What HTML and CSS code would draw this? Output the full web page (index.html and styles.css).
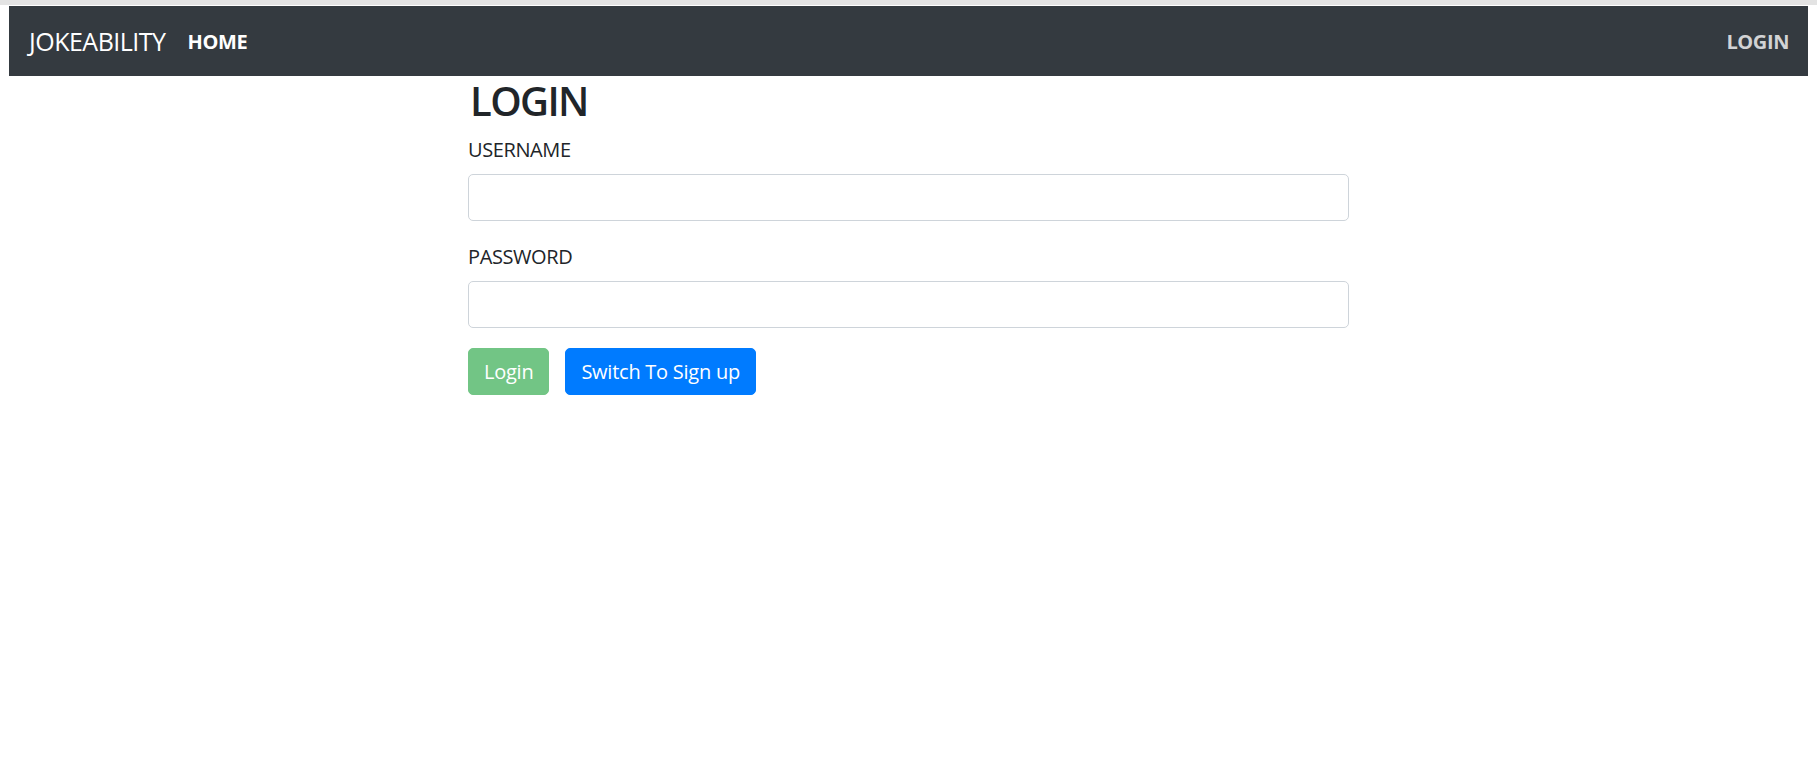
FILE: index.html
```html
<!DOCTYPE html>
<html lang="en">
<head>
<meta charset="utf-8">
<title>Jokeability - Login</title>
<link rel="stylesheet" href="styles.css">
</head>
<body>
<div class="chrome-strip"></div>
<div class="page">
  <nav class="navbar">
    <div class="nav-left">
      <a class="brand" href="#">JOKEABILITY</a>
      <a class="nav-link active" href="#">HOME</a>
    </div>
    <a class="nav-link muted" href="#">LOGIN</a>
  </nav>
  <main class="content">
    <h2 class="title">LOGIN</h2>
    <form class="form">
      <div class="form-group">
        <label class="label" for="username">USERNAME</label>
        <input class="input" id="username" type="text">
      </div>
      <div class="form-group">
        <label class="label" for="password">PASSWORD</label>
        <input class="input" id="password" type="password">
      </div>
      <div class="actions">
        <button class="btn btn-success" type="button" disabled>Login</button>
        <button class="btn btn-primary" type="button">Switch To Sign up</button>
      </div>
    </form>
  </main>
</div>
</body>
</html>
```

FILE: styles.css
```css
html, body {
  margin: 0;
  padding: 0;
  background: #fff;
}

body {
  font-family: "Open Sans", "Noto Sans", "Liberation Sans", sans-serif;
  font-size: 20px;
  line-height: 1.5;
  color: #212529;
}

.chrome-strip {
  height: 5px;
  background: #e3e3e3;
}

.page {
  padding: 1px 9px 0 9px;
}

.navbar {
  height: 70px;
  box-sizing: border-box;
  background: #343a40;
  padding: 10px 19px 10px 20px;
  display: flex;
  align-items: center;
  justify-content: space-between;
}

.nav-left {
  display: flex;
  align-items: center;
}

.brand {
  font-size: 25px;
  line-height: 37.5px;
  padding: 7px 0 5.5px;
  margin-right: 22px;
  color: #fff;
  text-decoration: none;
  letter-spacing: -0.5px;
}

.nav-link {
  font-size: 20px;
  line-height: 30px;
  padding: 11px 0 9px;
  font-weight: 700;
  text-decoration: none;
  letter-spacing: -0.4px;
}

.nav-link.active {
  color: #fff;
}

.nav-link.muted {
  color: rgba(255, 255, 255, 0.78);
}

.content {
  width: 881px;
  margin: 0 auto;
}

.title {
  margin: 1px 0 9px 2px;
  font-size: 40px;
  line-height: 48px;
  font-weight: 600;
  letter-spacing: -1.6px;
}

.form {
  margin: 0;
}

.form-group {
  margin-bottom: 20px;
}

.label {
  display: block;
  padding-top: 1px;
  margin-bottom: 9px;
  line-height: 30px;
  letter-spacing: -0.4px;
}

.input {
  display: block;
  width: 100%;
  height: 47px;
  box-sizing: border-box;
  border: 1px solid #ced4da;
  border-radius: 5px;
  padding: 7.5px 15px;
  font: inherit;
  background: #fff;
}

.actions {
  display: flex;
  gap: 16px;
}

.btn {
  font: inherit;
  font-size: 20px;
  line-height: 30px;
  height: 47px;
  padding: 8px 15px 7px;
  border: 1px solid transparent;
  border-radius: 5px;
  color: #fff;
  letter-spacing: -0.25px;
}

.btn-success {
  background: #28a745;
  border-color: #28a745;
  opacity: 0.65;
}

.btn-primary {
  background: #007bff;
  border-color: #007bff;
}
```
